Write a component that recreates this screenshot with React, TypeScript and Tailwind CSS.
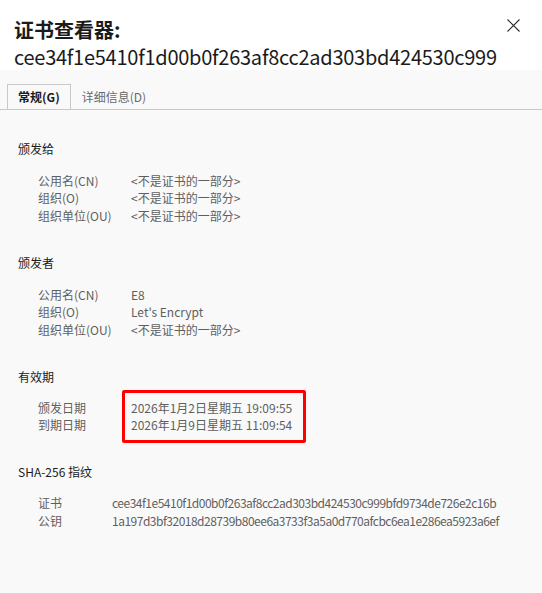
const font = { fontFamily: '"Noto Sans CJK SC", "Noto Sans", sans-serif' };

type Row = { label: string; value: string };

const NOT_PART = "<不是证书的一部分>";

const issuedTo: Row[] = [
  { label: "公用名(CN)", value: NOT_PART },
  { label: "组织(O)", value: NOT_PART },
  { label: "组织单位(OU)", value: NOT_PART },
];

const issuedBy: Row[] = [
  { label: "公用名(CN)", value: "E8" },
  { label: "组织(O)", value: "Let's Encrypt" },
  { label: "组织单位(OU)", value: NOT_PART },
];

const fingerprints: Row[] = [
  { label: "证书", value: "cee34f1e5410f1d00b0f263af8cc2ad303bd424530c999bfd9734de726e2c16b" },
  { label: "公钥", value: "1a197d3bf32018d28739b80ee6a3733f3a5a0d770afcbc6ea1e286ea5923a6ef" },
];

function Rows({ rows, labelWidth, valueClass = "" }: { rows: Row[]; labelWidth: string; valueClass?: string }) {
  return (
    <div className="pl-[20px]">
      {rows.map((r) => (
        <div key={r.label} className="flex leading-[17.5px] text-[12px] text-[#5f5f5f]">
          <span className={labelWidth}>{r.label}</span>
          <span className={valueClass}>{r.value}</span>
        </div>
      ))}
    </div>
  );
}

export default function App() {
  return (
    <div className="w-[542px] h-[593px] bg-[#f9f9f9] overflow-hidden" style={font}>
      {/* Header */}
      <div className="h-[70px] bg-white flex justify-between pl-[14px] pr-[22px] pt-[16px]">
        <div className="text-[20px] leading-[27px] text-[#1b1b1b]">
          <div className="font-bold">证书查看器:</div>
          <div className="tracking-[-0.25px]">cee34f1e5410f1d00b0f263af8cc2ad303bd424530c999</div>
        </div>
        <svg width="13" height="13" viewBox="0 0 13 13" className="mt-[3px]">
          <path d="M0.5 0.5 L12.5 12.5 M12.5 0.5 L0.5 12.5" stroke="#2b2b2b" strokeWidth="1.1" />
        </svg>
      </div>

      {/* Tabs */}
      <div className="mt-[14px] flex border-b border-[#c9c9c9] pl-[7px] text-[12px]">
        <div className="h-[25px] -mb-px border border-b-0 border-[#c9c9c9] bg-[#f9f9f9] px-[10px] flex items-center font-bold text-[#1b1b1b]">
          常规(G)
        </div>
        <div className="h-[25px] px-[11px] flex items-center text-[#6a6a6a]">详细信息(D)</div>
      </div>

      <div className="pl-[18px] text-[12px] leading-[17.5px]">
        {/* Issued to */}
        <div className="mt-[30px] text-[#1b1b1b]">颁发给</div>
        <div className="mt-[14px]">
          <Rows rows={issuedTo} labelWidth="w-[93px]" />
        </div>

        {/* Issued by */}
        <div className="mt-[30px] text-[#1b1b1b]">颁发者</div>
        <div className="mt-[14px]">
          <Rows rows={issuedBy} labelWidth="w-[93px]" />
        </div>

        {/* Validity */}
        <div className="mt-[30px] text-[#1b1b1b]">有效期</div>
        <div className="mt-[4px] flex pl-[20px] text-[#5f5f5f]">
          <div className="w-[84px] pt-[9px]">
            <div>颁发日期</div>
            <div>到期日期</div>
          </div>
          <div className="border-[3px] border-[#ff0000] rounded-[2px] pt-[6px] pb-[6px] pl-[6px] pr-[11px]">
            <div>2026年1月2日星期五 19:09:55</div>
            <div>2026年1月9日星期五 11:09:54</div>
          </div>
        </div>

        {/* Fingerprints */}
        <div className="mt-[20px] text-[#1b1b1b]">SHA-256 指纹</div>
        <div className="mt-[14px]">
          <Rows rows={fingerprints} labelWidth="w-[74px]" valueClass="tracking-[-0.5px]" />
        </div>
      </div>
    </div>
  );
}
